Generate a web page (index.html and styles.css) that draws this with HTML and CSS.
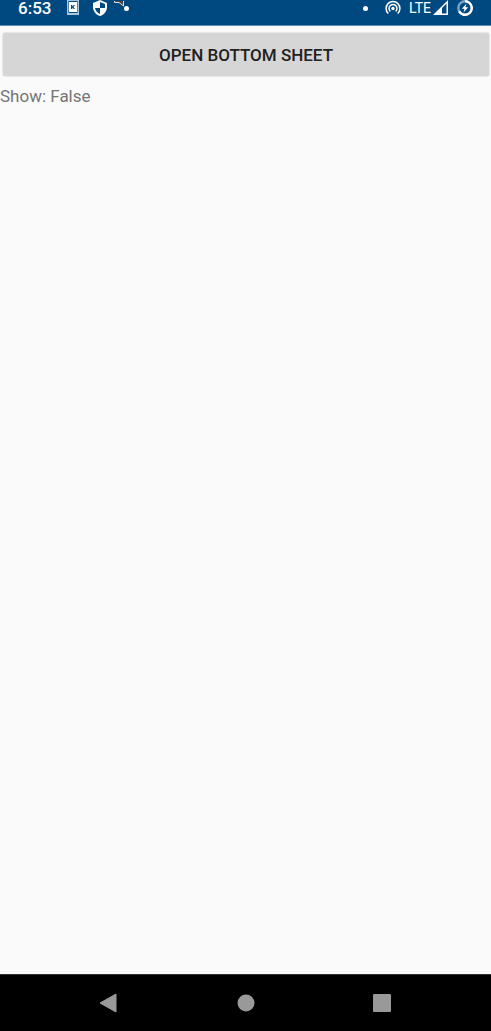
FILE: index.html
```html
<!DOCTYPE html>
<html lang="en">
<head>
    <meta charset="UTF-8">
    <meta name="viewport" content="width=device-width, initial-scale=1.0">
    <title>Bottom Sheet</title>
    <link rel="stylesheet" href="styles.css">
</head>
<body>
    <header class="status-bar">
        <div class="status-left">
            <span class="time">6:53</span>
            <svg class="keyboard-icon" width="12" height="16" viewBox="0 0 12 16">
                <path fill="#a9c5dc" d="M0 0h12v15H0z"/>
                <path fill="#004880" d="M1.500 1h9v12h-9z"/>
                <path fill="#fff" d="M2 2h8v10H2z"/>
                <path fill="#004880" d="M4 5h1.300v1.500L6.800 5H8L6.500 7 8 9H6.800L5.300 7.500V9H4z"/>
            </svg>
            <svg class="shield-icon" width="14" height="16" viewBox="0 0 14 16">
                <path fill="#fff" d="M7 0L0 3v4c0 4 3 8 7 9 4-1 7-5 7-9V3z"/>
                <path fill="#004880" d="M7 2l5 2v4H7zM2 8h5v6c-2.500-1-4.500-3-5-6z"/>
            </svg>
            <span class="more">
                <svg class="pointer" width="11" height="6" viewBox="0 0 11 6">
                    <path fill="#4b4542" stroke="#ddd" d="M.5 0v1.500H5L9.500 5V0"/>
                </svg>
                <span class="dot"></span>
            </span>
        </div>
        <div class="status-right">
            <span class="dot"></span>
            <svg class="hotspot-icon" width="16" height="16" viewBox="0 0 16 16" fill="none" stroke="#fff" stroke-width="1.500">
                <path d="M3.300 13.500A6.900 6.900 0 1 1 12.700 13.500"/>
                <path d="M5.300 11.400A4 4 0 1 1 10.700 11.400"/>
                <circle cx="8" cy="8.500" r="1.700" fill="#fff" stroke="none"/>
            </svg>
            <span class="network">LTE</span>
            <svg class="signal-icon" width="16" height="16" viewBox="0 0 16 16">
                <path fill="#fff" fill-rule="evenodd" d="M15 0v15H0zM9 8v5.500h4.500V3.500z"/>
            </svg>
            <svg class="battery-icon" width="16" height="16" viewBox="0 0 16 16">
                <circle cx="8" cy="8" r="6.700" fill="none" stroke="#7fa3c0" stroke-width="2.400"/>
                <path fill="none" stroke="#fff" stroke-width="2.400" d="M8 1.300a6.700 6.700 0 1 1-5.800 10"/>
                <path fill="#fff" d="M9.500 3.500L4.800 8.700h2.700L6.500 12.500l4.700-5.200H8.500z"/>
            </svg>
        </div>
    </header>

    <main class="content">
        <button class="open-btn" type="button">OPEN BOTTOM SHEET</button>
        <p class="show-state">Show: False</p>
    </main>

    <nav class="nav-bar">
        <button type="button" aria-label="Back">
            <svg width="20" height="20" viewBox="0 0 20 20">
                <path fill="#999" stroke="#999" stroke-linejoin="round" d="M17 1v18L1 10z"/>
            </svg>
        </button>
        <button type="button" aria-label="Home">
            <svg width="20" height="20" viewBox="0 0 20 20">
                <circle cx="10" cy="10" r="8.500" fill="#999"/>
            </svg>
        </button>
        <button type="button" aria-label="Recent apps">
            <svg width="20" height="20" viewBox="0 0 20 20">
                <rect x="0" y="1" width="18" height="18" rx="1" fill="#999"/>
            </svg>
        </button>
    </nav>
</body>
</html>
```
FILE: styles.css
```css
body {
    display: flex;
    flex-direction: column;
    min-height: 100vh;
    margin: 0;
    background: #fafafa;
    font-family: Roboto, sans-serif;
}
svg {
    display: block;
}
.status-bar {
    display: flex;
    justify-content: space-between;
    align-items: flex-start;
    height: 25px;
    padding: 0 18px;
    border-bottom: 1px solid #5f8cb0;
    background: #004880;
    color: white;
}
.status-left,
.status-right {
    display: flex;
    align-items: center;
    height: 16px;
}
.time {
    font-size: 17px;
    font-weight: 500;
    line-height: 16px;
}
.keyboard-icon {
    margin-left: 16px;
}
.shield-icon {
    margin-left: 14px;
}
.more {
    position: relative;
    margin-left: 17px;
}
.pointer {
    position: absolute;
    right: 4px;
    bottom: 4px;
}
.dot {
    display: block;
    width: 5px;
    height: 5px;
    border-radius: 50%;
    background: white;
}
.hotspot-icon {
    margin-left: 17px;
}
.network {
    margin-left: 8px;
    font-size: 14px;
    line-height: 16px;
}
.signal-icon {
    margin-left: 2px;
}
.battery-icon {
    margin-left: 8px;
}
.content {
    flex: 1;
    padding-top: 7px;
}
.open-btn {
    display: block;
    width: calc(100% - 5px);
    height: 43px;
    margin: 0 2px 0 3px;
    border: none;
    border-radius: 2px;
    background: #d6d6d6;
    box-shadow: 0 0 2px #bbb;
    color: #212121;
    font-family: inherit;
    font-size: 17px;
    font-weight: 500;
    cursor: pointer;
}
.show-state {
    margin: 10px 0 0;
    color: #757575;
    font-size: 17px;
    line-height: 20px;
}
.nav-bar {
    display: flex;
    height: 56px;
    padding: 0 40px;
    border-top: 1px solid #333;
    background: black;
}
.nav-bar button {
    display: flex;
    flex: 1;
    align-items: center;
    justify-content: center;
    padding: 0;
    border: none;
    background: none;
    cursor: pointer;
}
```
